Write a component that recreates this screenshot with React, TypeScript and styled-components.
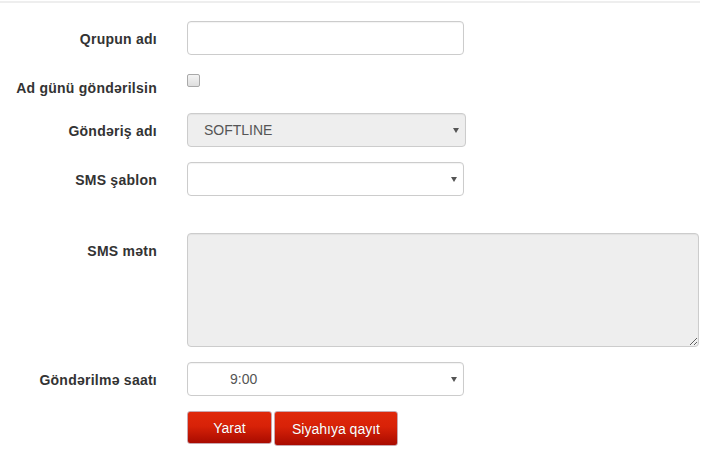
import * as React from "react";
import styled, { createGlobalStyle } from "styled-components";

const GlobalStyle = createGlobalStyle`
  html, body {
    margin: 0;
    padding: 0;
    background: #ffffff;
    font-family: "Liberation Sans", Arial, sans-serif;
    color: #333333;
  }
`;

const Page = styled.div`
  margin-top: 1px;
  border-top: 2px solid #eeeeee;
  width: 700px;
  padding-top: 18px;
`;

const FormRow = styled.div<{ $gap?: number }>`
  display: grid;
  grid-template-columns: 157px 277px;
  column-gap: 30px;
  align-items: start;
  margin-bottom: ${(p) => (p.$gap ?? 15)}px;
`;

const WideRow = styled(FormRow)`
  grid-template-columns: 157px 512px;
`;

const Label = styled.label<{ $top?: number }>`
  display: block;
  text-align: right;
  font-size: 14px;
  letter-spacing: 0.25px;
  font-weight: bold;
  line-height: 20px;
  color: #333333;
  padding-top: ${(p) => (p.$top ?? 8)}px;
`;

const TextInput = styled.input`
  box-sizing: border-box;
  width: 277px;
  height: 34px;
  padding: 6px 12px;
  border: 1px solid #cccccc;
  border-radius: 4px;
  font-family: "Liberation Sans", Arial, sans-serif;
  font-size: 14px;
  color: #555555;
  background: #ffffff;
  box-shadow: inset 0 1px 1px rgba(0, 0, 0, 0.05);
  outline: none;
`;

const CheckCell = styled.div`
  padding-top: 4px;
  height: 23px;
`;

const CheckBox = styled.input`
  appearance: none;
  box-sizing: border-box;
  margin: 0;
  width: 13px;
  height: 13px;
  border: 1px solid #a9a9a9;
  border-radius: 2px;
  background: linear-gradient(#f4f4f4, #dedede);
  display: block;
`;

const SelectWrap = styled.div<{ $width?: number }>`
  position: relative;
  width: ${(p) => p.$width ?? 277}px;
`;

const Select = styled.select<{ $indent?: number; $disabled?: boolean }>`
  appearance: none;
  box-sizing: border-box;
  width: 100%;
  height: 34px;
  margin: 0;
  padding: 6px 24px 6px ${(p) => p.$indent ?? 16}px;
  border: 1px solid #cccccc;
  border-radius: 4px;
  font-family: "Liberation Sans", Arial, sans-serif;
  font-size: 14px;
  color: #555555;
  background: ${(p) => (p.$disabled ? "#eeeeee" : "#ffffff")};
  box-shadow: inset 0 1px 1px rgba(0, 0, 0, 0.05);
  outline: none;
  opacity: 1;

  &:disabled {
    color: #555555;
    opacity: 1;
  }
`;

const Caret = styled.span`
  position: absolute;
  right: 7px;
  top: 15px;
  width: 0;
  height: 0;
  border-left: 3.5px solid transparent;
  border-right: 3.5px solid transparent;
  border-top: 5px solid #555555;
  pointer-events: none;
`;

const TextArea = styled.textarea`
  box-sizing: border-box;
  display: block;
  width: 512px;
  height: 114px;
  padding: 6px 12px;
  border: 1px solid #cccccc;
  border-radius: 4px;
  background: #eeeeee;
  font-family: "Liberation Sans", Arial, sans-serif;
  font-size: 14px;
  color: #555555;
  resize: both;
  outline: none;
  box-shadow: inset 0 1px 1px rgba(0, 0, 0, 0.05);
`;

const ButtonBar = styled.div`
  display: flex;
  gap: 2px;
  align-items: flex-start;
`;

const RedButton = styled.button<{ $width: number; $height: number }>`
  box-sizing: border-box;
  width: ${(p) => p.$width}px;
  height: ${(p) => p.$height}px;
  margin: 0;
  padding: 0;
  border: 1px solid #c9a8b0;
  border-radius: 3px;
  background: linear-gradient(#e0280a 0%, #d82208 45%, #a90b00 100%);
  color: #ffffff;
  font-family: "Liberation Sans", Arial, sans-serif;
  font-size: 14px;
  line-height: 1;
  text-shadow: 0 0 1px rgba(0, 0, 0, 0.25);
  cursor: pointer;
`;

const Spacer = styled.div``;

export default function App() {
  return (
    <>
      <GlobalStyle />
      <Page>
        <FormRow>
          <Label>Qrupun adı</Label>
          <TextInput type="text" />
        </FormRow>

        <FormRow $gap={15}>
          <Label>Ad günü göndərilsin</Label>
          <CheckCell>
            <CheckBox type="checkbox" />
          </CheckCell>
        </FormRow>

        <FormRow>
          <Label>Göndəriş adı</Label>
          <SelectWrap $width={279}>
            <Select $disabled disabled defaultValue="softline">
              <option value="softline">SOFTLINE</option>
            </Select>
            <Caret />
          </SelectWrap>
        </FormRow>

        <FormRow $gap={37}>
          <Label>SMS şablon</Label>
          <SelectWrap>
            <Select defaultValue="">
              <option value=""></option>
            </Select>
            <Caret />
          </SelectWrap>
        </FormRow>

        <WideRow>
          <Label>SMS mətn</Label>
          <TextArea readOnly />
        </WideRow>

        <FormRow>
          <Label>Göndərilmə saatı</Label>
          <SelectWrap>
            <Select $indent={42} defaultValue="9">
              <option value="9">9:00</option>
            </Select>
            <Caret />
          </SelectWrap>
        </FormRow>

        <FormRow>
          <Spacer />
          <ButtonBar>
            <RedButton $width={85} $height={33}>Yarat</RedButton>
            <RedButton $width={124} $height={35}>Siyahıya qayıt</RedButton>
          </ButtonBar>
        </FormRow>
      </Page>
    </>
  );
}
